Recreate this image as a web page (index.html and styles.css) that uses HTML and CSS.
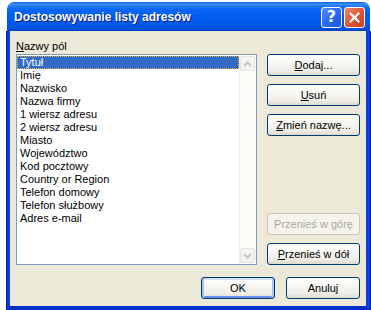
FILE: index.html
```html
<!DOCTYPE html>
<html lang="pl">
<head>
  <meta charset="UTF-8">
  <meta name="viewport" content="width=device-width, initial-scale=1.0">
  <title>Dostosowywanie listy adresów</title>
  <link rel="stylesheet" href="styles.css">
</head>
<body>
  <div class="window">
    <div class="titlebar">
      <span class="title">Dostosowywanie listy adresów</span>
      <div class="caption-buttons">
        <span class="cap-btn help">?</span>
        <span class="cap-btn close">
          <svg width="11" height="11" viewBox="0 0 11 11">
            <path d="M1.5 1.5 L9.5 9.5 M9.5 1.5 L1.5 9.5" stroke="#fff" stroke-width="2.2" stroke-linecap="square"/>
          </svg>
        </span>
      </div>
    </div>
    <div class="frame">
      <div class="main">
        <div class="fields">
          <div class="label"><u>N</u>azwy pól</div>
          <div class="listbox">
            <ul class="items">
              <li class="selected">Tytuł</li>
              <li>Imię</li>
              <li>Nazwisko</li>
              <li>Nazwa firmy</li>
              <li>1 wiersz adresu</li>
              <li>2 wiersz adresu</li>
              <li>Miasto</li>
              <li>Województwo</li>
              <li>Kod pocztowy</li>
              <li>Country or Region</li>
              <li>Telefon domowy</li>
              <li>Telefon służbowy</li>
              <li>Adres e-mail</li>
            </ul>
            <div class="scrollbar">
              <span class="scroll-btn">
                <svg width="9" height="6" viewBox="0 0 9 6"><path d="M1 5 L4.5 1.5 L8 5" fill="none" stroke="#c9c8bf" stroke-width="2"/></svg>
              </span>
              <span class="scroll-btn">
                <svg width="9" height="6" viewBox="0 0 9 6"><path d="M1 1 L4.5 4.5 L8 1" fill="none" stroke="#c9c8bf" stroke-width="2"/></svg>
              </span>
            </div>
          </div>
        </div>
        <div class="actions">
          <button class="btn"><u>D</u>odaj...</button>
          <button class="btn"><u>U</u>suń</button>
          <button class="btn"><u>Z</u>mień nazwę...</button>
          <div class="spacer"></div>
          <button class="btn" disabled>Przenieś w górę</button>
          <button class="btn"><u>P</u>rzenieś w dół</button>
        </div>
      </div>
      <div class="footer">
        <button class="btn small default">OK</button>
        <button class="btn small">Anuluj</button>
      </div>
    </div>
  </div>
</body>
</html>
```

FILE: styles.css
```css
body {
  margin: 0;
  padding: 0;
  background-color: #ffffff;
  font-family: "Liberation Sans", Arial, sans-serif;
  font-size: 11px;
}
.window {
  width: 363px;
  height: 308px;
  margin: 2px 0 0 7px;
  display: flex;
  flex-direction: column;
}
.titlebar {
  height: 29px;
  flex-shrink: 0;
  border-radius: 7px 7px 0 0;
  background: linear-gradient(to bottom, #0a5ad6 0%, #3c93ff 7%, #2a80ff 12%, #0a66f4 25%, #005ef0 50%, #0058e8 80%, #004fd8 92%, #0040c0 100%);
  display: flex;
  align-items: center;
  justify-content: space-between;
  padding: 0 5px 0 7px;
  box-sizing: border-box;
}
.title {
  font-family: "Liberation Sans", Arial, sans-serif;
  font-weight: bold;
  font-size: 12px;
  color: #ffffff;
  text-shadow: 1px 1px 0 #0a1a8a;
  margin-top: 1px;
}
.caption-buttons {
  display: flex;
  gap: 2px;
  margin-top: 1px;
}
.cap-btn {
  width: 21px;
  height: 21px;
  box-sizing: border-box;
  border: 1px solid #ffffff;
  border-radius: 3px;
  display: flex;
  align-items: center;
  justify-content: center;
  color: #ffffff;
}
.help {
  background: linear-gradient(135deg, #5b92f5 0%, #2d6cf0 45%, #1b55e0 100%);
  font-family: "DejaVu Sans", sans-serif;
  font-weight: bold;
  font-size: 16px;
  line-height: 1;
}
.close {
  background: linear-gradient(135deg, #f08a68 0%, #e2583a 45%, #cc4020 100%);
}
.frame {
  flex: 1;
  background-color: #ece9d8;
  border-left: 3px solid #0a3ee0;
  border-right: 4px solid #0a3ee0;
  border-bottom: 4px solid #0030c8;
  box-shadow: inset 0 -1px 0 #ece9d8, -1px 0 0 #0018a0, 1px 0 0 #0018a0, 0 1px 0 #00138c;
  display: flex;
  flex-direction: column;
}
.main {
  display: flex;
  padding: 9px 6px 0 6px;
}
.fields {
  display: flex;
  flex-direction: column;
}
.label {
  height: 14px;
  line-height: 12px;
  color: #000000;
}
.listbox {
  width: 241px;
  height: 211px;
  box-sizing: border-box;
  border: 1px solid #7f9db9;
  background: #ffffff;
  display: flex;
}
.items {
  list-style: none;
  margin: 0;
  padding: 1px 0 0 0;
  flex: 1;
}
.items li {
  height: 13px;
  line-height: 13px;
  padding-left: 3px;
  color: #000000;
  white-space: nowrap;
}
.items li.selected {
  background-color: #316ac5;
  color: #ffffff;
  outline: 1px dotted #e8b040;
  outline-offset: -1px;
}
.scrollbar {
  width: 17px;
  background: #fbfbf8;
  border-left: 1px solid #eeede5;
  box-sizing: border-box;
  display: flex;
  flex-direction: column;
  justify-content: space-between;
  padding: 1px 1px 1px 0;
}
.scroll-btn {
  height: 15px;
  box-sizing: border-box;
  border: 1px solid #e6e5dc;
  border-radius: 2px;
  background: #f5f5ef;
  display: flex;
  align-items: center;
  justify-content: center;
}
.actions {
  display: flex;
  flex-direction: column;
  gap: 8px;
  margin-left: 10px;
  margin-top: 14px;
  height: 211px;
}
.spacer {
  flex: 1;
}
.btn {
  width: 93px;
  height: 22px;
  flex-shrink: 0;
  padding: 0;
  font-family: "Liberation Sans", Arial, sans-serif;
  font-size: 11px;
  color: #000000;
  border: 1px solid #003c74;
  border-radius: 3px;
  background: linear-gradient(to bottom, #ffffff 0%, #f7f6f2 40%, #eeede6 80%, #dcd8cc 100%);
}
.btn:disabled {
  color: #aca899;
  border-color: #c9c7ba;
  background: #f5f4ea;
}
.footer {
  display: flex;
  justify-content: flex-end;
  gap: 11px;
  padding: 12px 6px 0 0;
}
.btn.small {
  width: 74px;
}
.btn.default {
  box-shadow: inset 2px 0 0 #a9c4f4, inset -2px 0 0 #a9c4f4, inset 0 2px 0 #cfe3ff, inset 0 -2px 0 #6a8ceb;
}
```
